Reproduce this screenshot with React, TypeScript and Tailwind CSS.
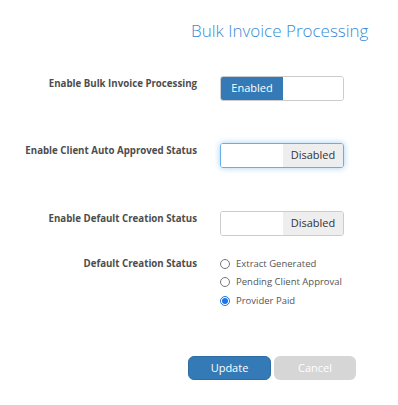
const font = { fontFamily: '"Open Sans", "Noto Sans", sans-serif' };

function Toggle({ on, focused }: { on: boolean; focused?: boolean }) {
  return (
    <div
      className={
        "flex h-[25px] w-[124px] overflow-hidden rounded-[3px] border text-[11px] " +
        (focused
          ? "border-[#66afe9] shadow-[0_0_6px_rgba(102,175,233,0.6)]"
          : "border-[#cccccc]")
      }
    >
      {on ? (
        <>
          <div className="flex w-[62px] items-center justify-center bg-[#337ab7] text-white">Enabled</div>
          <div className="flex-1 bg-white" />
        </>
      ) : (
        <>
          <div className="w-[62px] bg-white" />
          <div className="flex flex-1 items-center justify-center bg-[#eeeeee] text-[#333]">Disabled</div>
        </>
      )}
    </div>
  );
}

function Radio({ checked, label }: { checked?: boolean; label: string }) {
  return (
    <label className="flex h-[18.5px] items-center gap-[6px] text-[9.5px] text-[#555]">
      <span
        className={
          "flex h-[10px] w-[10px] items-center justify-center rounded-full border " +
          (checked ? "border-[#1a73e8]" : "border-[#767676]")
        }
      >
        {checked && <span className="h-[6px] w-[6px] rounded-full bg-[#1a73e8]" />}
      </span>
      {label}
    </label>
  );
}

export default function App() {
  return (
    <div className="h-[405px] w-[398px] bg-white" style={font}>
      <h1 className="pt-[18px] pl-[191px] text-[17px] font-light text-[#3a8ad4]">Bulk Invoice Processing</h1>

      <div className="mt-[32px] grid grid-cols-[197px_1fr] gap-x-[23px]">
        <div className="pt-[1px] text-right text-[9.7px] font-bold text-[#4d4d4d]">Enable Bulk Invoice Processing</div>
        <Toggle on />

        <div className="mt-[42px] pt-[1px] text-right text-[9.7px] font-bold text-[#4d4d4d]">Enable Client Auto Approved Status</div>
        <div className="mt-[42px]">
          <Toggle on={false} focused />
        </div>

        <div className="mt-[43px] pt-[1px] text-right text-[9.7px] font-bold text-[#4d4d4d]">Enable Default Creation Status</div>
        <div className="mt-[43px]">
          <Toggle on={false} />
        </div>

        <div className="mt-[19px] pt-[2px] text-right text-[9.7px] font-bold text-[#4d4d4d]">Default Creation Status</div>
        <div className="mt-[19px] flex flex-col">
          <Radio label="Extract Generated" />
          <Radio label="Pending Client Approval" />
          <Radio checked label="Provider Paid" />
        </div>
      </div>

      <div className="mt-[46px] flex gap-[3px] pl-[188px]">
        <button className="h-[24px] w-[83px] rounded-[6px] border border-[#2e6da4] bg-[#337ab7] text-[11px] text-white">Update</button>
        <button className="h-[24px] w-[82px] rounded-[6px] bg-[#d6d6d6] text-[11px] text-white">Cancel</button>
      </div>
    </div>
  );
}
